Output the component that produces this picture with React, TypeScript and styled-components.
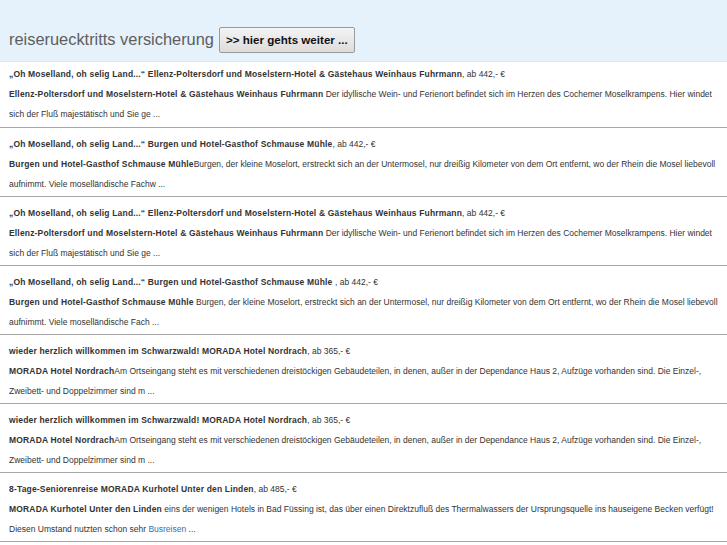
import React from 'react'
import styled, { createGlobalStyle } from 'styled-components'


interface Offer {
  title: string
  price: string
  name: string
  text: string
  link?: string
  rest?: string
}

const OFFERS: Offer[] = [
  {
    title: '„Oh Moselland, oh selig Land...“ Ellenz-Poltersdorf und Moselstern-Hotel & Gästehaus Weinhaus Fuhrmann',
    price: ', ab 442,- €',
    name: 'Ellenz-Poltersdorf und Moselstern-Hotel & Gästehaus Weinhaus Fuhrmann',
    text: ' Der idyllische Wein- und Ferienort befindet sich im Herzen des Cochemer Moselkrampens. Hier windet sich der Fluß majestätisch und Sie ge ...',
  },
  {
    title: '„Oh Moselland, oh selig Land...“ Burgen und Hotel-Gasthof Schmause Mühle',
    price: ', ab 442,- €',
    name: 'Burgen und Hotel-Gasthof Schmause Mühle',
    text: 'Burgen, der kleine Moselort, erstreckt sich an der Untermosel, nur dreißig Kilometer von dem Ort entfernt, wo der Rhein die Mosel liebevoll aufnimmt. Viele moselländische Fachw ...',
  },
  {
    title: '„Oh Moselland, oh selig Land...“ Ellenz-Poltersdorf und Moselstern-Hotel & Gästehaus Weinhaus Fuhrmann',
    price: ', ab 442,- €',
    name: 'Ellenz-Poltersdorf und Moselstern-Hotel & Gästehaus Weinhaus Fuhrmann',
    text: ' Der idyllische Wein- und Ferienort befindet sich im Herzen des Cochemer Moselkrampens. Hier windet sich der Fluß majestätisch und Sie ge ...',
  },
  {
    title: '„Oh Moselland, oh selig Land...“ Burgen und Hotel-Gasthof Schmause Mühle ',
    price: ', ab 442,- €',
    name: 'Burgen und Hotel-Gasthof Schmause Mühle',
    text: ' Burgen, der kleine Moselort, erstreckt sich an der Untermosel, nur dreißig Kilometer von dem Ort entfernt, wo der Rhein die Mosel liebevoll aufnimmt. Viele moselländische Fach ...',
  },
  {
    title: 'wieder herzlich willkommen im Schwarzwald! MORADA Hotel Nordrach',
    price: ', ab 365,- €',
    name: 'MORADA Hotel Nordrach',
    text: 'Am Ortseingang steht es mit verschiedenen dreistöckigen Gebäudeteilen, in denen, außer in der Dependance Haus 2, Aufzüge vorhanden sind. Die Einzel-, Zweibett- und Doppelzimmer sind m ...',
  },
  {
    title: 'wieder herzlich willkommen im Schwarzwald! MORADA Hotel Nordrach',
    price: ', ab 365,- €',
    name: 'MORADA Hotel Nordrach',
    text: 'Am Ortseingang steht es mit verschiedenen dreistöckigen Gebäudeteilen, in denen, außer in der Dependance Haus 2, Aufzüge vorhanden sind. Die Einzel-, Zweibett- und Doppelzimmer sind m ...',
  },
  {
    title: '8-Tage-Seniorenreise MORADA Kurhotel Unter den Linden',
    price: ', ab 485,- €',
    name: 'MORADA Kurhotel Unter den Linden',
    text: ' eins der wenigen Hotels in Bad Füssing ist, das über einen Direktzufluß des Thermalwassers der Ursprungsquelle ins hauseigene Becken verfügt! Diesen Umstand nutzten schon sehr ',
    link: 'Busreisen',
    rest: ' ...',
  },
]


const GlobalStyle = createGlobalStyle`
  html, body {
    margin: 0;
    padding: 0;
    background: #fff;
  }
  body {
    font-family: "Liberation Sans", Arial, sans-serif;
    color: #333;
  }
`

const Header = styled.header`
  display: flex;
  align-items: center;
  gap: 5px;
  height: 62px;
  padding: 18px 9px 0;
  box-sizing: border-box;
  background: #e5f1fb;
  border-bottom: 1px solid #d7e6f2;
`

const SiteTitle = styled.h1`
  margin: 0;
  font-size: 16.4px;
  font-weight: normal;
  color: #5e5e5e;
`

const GoButton = styled.button`
  height: 26px;
  padding: 0 6px;
  border: 1px solid #9a9a9a;
  border-radius: 2px;
  background: linear-gradient(#f4f4f4, #dcdcdc);
  font-family: "Liberation Sans", Arial, sans-serif;
  font-size: 11.6px;
  font-weight: bold;
  color: #111;
`

const List = styled.main`
  display: flex;
  flex-direction: column;
`

const Item = styled.article`
  padding: 2px 4px 3px 9px;
  border-bottom: 1px solid #a8a8a8;
  font-size: 8.5px;
  line-height: 20px;

  & + & {
    padding-top: 6px;
    padding-bottom: 2px;
  }

  b {
    letter-spacing: 0.17px;
  }
`

const ItemTitle = styled.div``

const Desc = styled.p`
  margin: 0;
`

const Link = styled.a`
  color: #2a74b8;
  text-decoration: none;
`


export default function App() {
  return (
    <>
      <GlobalStyle />
      <Header>
        <SiteTitle>reiseruecktritts versicherung</SiteTitle>
        <GoButton>&gt;&gt; hier gehts weiter ...</GoButton>
      </Header>
      <List>
        {OFFERS.map((o, i) =>
          <Item key={i}>
            <ItemTitle><b>{o.title}</b>{o.price}</ItemTitle>
            <Desc>
              <b>{o.name}</b>{o.text}
              {o.link ? <Link href="#">{o.link}</Link> : null}
              {o.rest}
            </Desc>
          </Item>
        )}
      </List>
    </>
  )
}
